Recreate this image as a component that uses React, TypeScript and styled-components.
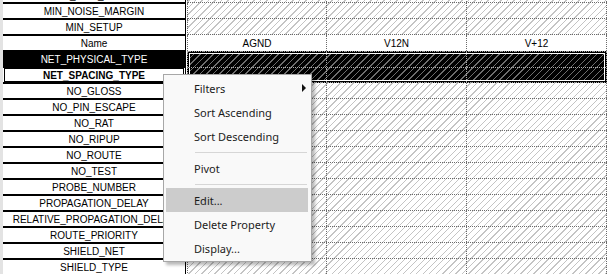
import React from "react";
import styled, { createGlobalStyle, css } from "styled-components";

const GlobalStyle = createGlobalStyle`
  html, body {
    margin: 0;
    padding: 0;
    background: #fff;
    overflow: hidden;
  }
`;

const hatch = (line: string, base: string) => css`
  background-color: ${base};
  background-image: repeating-linear-gradient(
    135deg,
    ${line} 0px,
    ${line} 1px,
    transparent 1px,
    transparent 4.6px
  );
  background-attachment: fixed;
`;

const Window = styled.div`
  position: relative;
  display: flex;
  width: 608px;
  height: 274px;
  overflow: hidden;
  background: #fff;
`;

const Gutter = styled.div`
  width: 3px;
  flex-shrink: 0;
  background: #e3e3e3;
`;

// scrolled content: first row is only partly visible
const Table = styled.div`
  display: flex;
  align-items: flex-start;
  margin-top: -13px;
`;

const HeaderColumn = styled.div`
  width: 183px;
  flex-shrink: 0;
  display: flex;
  flex-direction: column;
  box-sizing: border-box;
  border-right: 1px solid #000;
  margin-right: 1px;
`;

type HeaderVariant = "normal" | "selected" | "focused";

const HeaderCell = styled.div<{ $variant: HeaderVariant }>`
  height: 16px;
  box-sizing: border-box;
  border-top: 1px solid #000;
  border-bottom: 1px solid #000;
  padding: 0 8px;
  font: 10px "Liberation Sans", Arial, sans-serif;
  line-height: 15px;
  text-align: center;
  white-space: nowrap;
  overflow: hidden;
  color: ${p => (p.$variant === "selected" ? "#fff" : "#000")};
  background: ${p => (p.$variant === "selected" ? "#000" : "#fff")};
  font-weight: ${p => (p.$variant === "focused" ? "bold" : "normal")};
  ${p =>
    p.$variant === "focused" &&
    css`
      outline: 1px solid #000;
      outline-offset: -2px;
    `}
`;

const DataGrid = styled.div`
  display: flex;
  flex-direction: column;
  width: 420px;
  flex-shrink: 0;
`;

const DataRow = styled.div<{ $plain?: boolean }>`
  display: grid;
  grid-template-columns: 139px 140px 140px;
  height: 16px;
  box-sizing: border-box;
  border-left: 1px dotted #6a6a6a;
  border-bottom: ${p => (p.$plain ? "none" : "1px dotted #6a6a6a")};
  ${p => (p.$plain ? "background: #fff;" : hatch("#c4c4c4", "#fff"))}
`;

const DataCell = styled.div`
  border-right: 1px dotted #6a6a6a;
  font: 10px "Liberation Sans", Arial, sans-serif;
  line-height: 17px;
  text-align: center;
  color: #000;
  white-space: nowrap;
  overflow: hidden;
`;

const SelectedBlock = styled.div`
  display: flex;
  flex-direction: column;
  height: 32px;
  box-sizing: border-box;
  border: 1px dotted #a8a8a8;
  box-shadow: inset 0 0 0 1px #000, inset 0 0 0 2px #fff;
  ${hatch("#6e6e6e", "#000")}
`;

const SelectedRow = styled.div<{ $last?: boolean }>`
  display: grid;
  grid-template-columns: 139px 140px 139px;
  box-sizing: border-box;
  height: ${p => (p.$last ? "14px" : "16px")};
  border-bottom: ${p => (p.$last ? "none" : "1px dotted #a8a8a8")};
`;

const SelectedCell = styled.div<{ $last?: boolean }>`
  border-right: ${p => (p.$last ? "none" : "1px dotted #a8a8a8")};
`;

const Menu = styled.div`
  position: absolute;
  left: 163px;
  top: 74px;
  width: 149px;
  box-sizing: border-box;
  padding: 1px 3px 1px 2px;
  background: #f9f9f9;
  border: 1px solid #a7a7a7;
  box-shadow: 3px 3px 3px rgba(0, 0, 0, 0.28);
  font: 11px "Noto Sans", "Open Sans", sans-serif;
  color: #1c1c1c;
`;

const MenuItem = styled.div<{ $active?: boolean }>`
  display: flex;
  align-items: center;
  height: 24px;
  padding: 0 2px 0 28px;
  background: ${p => (p.$active ? "#cccccc" : "transparent")};
  white-space: nowrap;
`;

const SubArrow = styled.span`
  margin-left: auto;
  width: 0;
  height: 0;
  border-left: 4px solid #111;
  border-top: 4px solid transparent;
  border-bottom: 4px solid transparent;
`;

const Separator = styled.div`
  height: 8px;
  display: flex;
  align-items: center;
  &::after {
    content: "";
    flex: 1;
    height: 1px;
    margin: 0 1px 0 29px;
    background: #d6d6d6;
  }
`;

type HeaderRow = { label: string; variant?: HeaderVariant };

const headerRows: HeaderRow[] = [
  { label: "MIN_LINE_WIDTH" },
  { label: "MIN_NOISE_MARGIN" },
  { label: "MIN_SETUP" },
  { label: "Name" },
  { label: "NET_PHYSICAL_TYPE", variant: "selected" },
  { label: "NET_SPACING_TYPE", variant: "focused" },
  { label: "NO_GLOSS" },
  { label: "NO_PIN_ESCAPE" },
  { label: "NO_RAT" },
  { label: "NO_RIPUP" },
  { label: "NO_ROUTE" },
  { label: "NO_TEST" },
  { label: "PROBE_NUMBER" },
  { label: "PROPAGATION_DELAY" },
  { label: "RELATIVE_PROPAGATION_DELAY" },
  { label: "ROUTE_PRIORITY" },
  { label: "SHIELD_NET" },
  { label: "SHIELD_TYPE" }
];

const nets = ["AGND", "V12N", "V+12"];

type MenuEntry = { label?: string; sub?: boolean; active?: boolean; sep?: boolean };

const menuEntries: MenuEntry[] = [
  { label: "Filters", sub: true },
  { label: "Sort Ascending" },
  { label: "Sort Descending" },
  { sep: true },
  { label: "Pivot" },
  { sep: true },
  { label: "Edit...", active: true },
  { label: "Delete Property" },
  { label: "Display..." }
];

const App: React.FC = () => {
  const renderBlankRows = (count: number, key: string) =>
    Array.from({ length: count }).map((_, i) => (
      <DataRow key={key + i}>
        {nets.map(n => (
          <DataCell key={n} />
        ))}
      </DataRow>
    ));

  return (
    <>
      <GlobalStyle />
      <Window>
        <Gutter />
        <Table>
          <HeaderColumn>
            {headerRows.map(row => (
              <HeaderCell key={row.label} $variant={row.variant || "normal"}>
                {row.label}
              </HeaderCell>
            ))}
          </HeaderColumn>
          <DataGrid>
            {renderBlankRows(3, "top")}
            <DataRow $plain>
              {nets.map(n => (
                <DataCell key={n}>{n}</DataCell>
              ))}
            </DataRow>
            <SelectedBlock>
              <SelectedRow>
                {nets.map((n, i) => (
                  <SelectedCell key={n} $last={i === nets.length - 1} />
                ))}
              </SelectedRow>
              <SelectedRow $last>
                {nets.map((n, i) => (
                  <SelectedCell key={n} $last={i === nets.length - 1} />
                ))}
              </SelectedRow>
            </SelectedBlock>
            {renderBlankRows(12, "rest")}
          </DataGrid>
        </Table>

        <Menu>
          {menuEntries.map((entry, index) =>
            entry.sep ? (
              <Separator key={index} />
            ) : (
              <MenuItem key={index} $active={entry.active}>
                {entry.label}
                {entry.sub && <SubArrow />}
              </MenuItem>
            )
          )}
        </Menu>
      </Window>
    </>
  );
};

export default App;
